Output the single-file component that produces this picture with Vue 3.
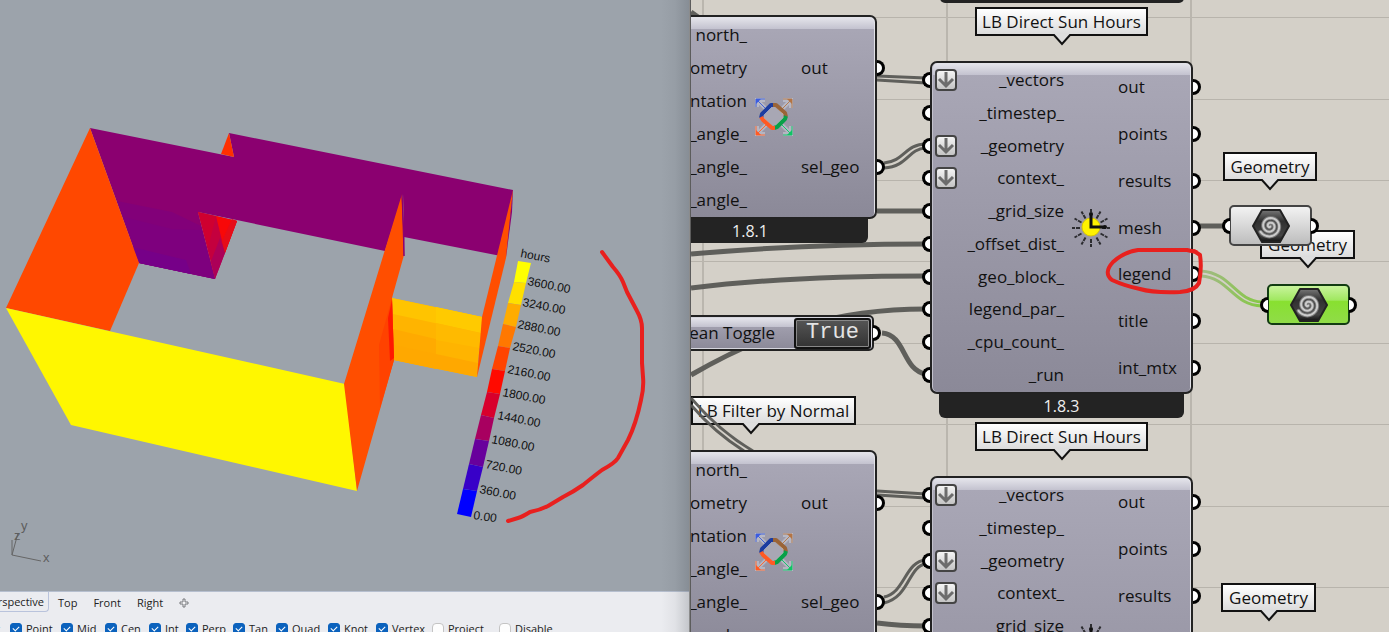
<script setup>
const legendSteps = [
  { color: '#ffff00', label: 'hours', x: 520, y: 257 },
  { color: '#ffe000', label: '3600.00', x: 527, y: 285 },
  { color: '#ffac00', label: '3240.00', x: 522, y: 306 },
  { color: '#ff7800', label: '2880.00', x: 517, y: 328 },
  { color: '#ff4400', label: '2520.00', x: 512, y: 350 },
  { color: '#ff0a00', label: '2160.00', x: 507, y: 373 },
  { color: '#d8002c', label: '1800.00', x: 502, y: 396 },
  { color: '#a80060', label: '1440.00', x: 497, y: 419 },
  { color: '#68009c', label: '1080.00', x: 491, y: 443 },
  { color: '#3800c8', label: '720.00', x: 485, y: 468 },
  { color: '#0000ff', label: '360.00', x: 479, y: 493 },
]
const legendLeft = [[518, 261], [514, 282], [508, 303], [503, 324], [498, 346], [492, 369], [487, 392], [481, 415], [475, 439], [469, 464], [463, 489], [457, 514]]
const legendRight = [[531, 263], [526, 283], [521, 305], [516, 327], [510, 348], [505, 371], [500, 394], [494, 418], [489, 441], [483, 467], [477, 491], [471, 517]]
const segment = (i) => [legendLeft[i], legendRight[i], legendRight[i + 1], legendLeft[i + 1]].map((p) => p.join(',')).join(' ')

const views = ['Perspective', 'Top', 'Front', 'Right']
const snaps = [
  { name: 'Near', on: true },
  { name: 'Point', on: true },
  { name: 'Mid', on: true },
  { name: 'Cen', on: true },
  { name: 'Int', on: true },
  { name: 'Perp', on: true },
  { name: 'Tan', on: true },
  { name: 'Quad', on: true },
  { name: 'Knot', on: true },
  { name: 'Vertex', on: true },
  { name: 'Project', on: false },
  { name: 'Disable', on: false },
]

const filterInputs = ['north_', '_geometry', '_orientation', '_angle_', '_angle_', '_angle_'].map((name) => ({ name }))
const filterOutputs = ['out', 'sel_geo']
const sunInputs = [
  { name: '_vectors', flat: true },
  { name: '_timestep_' },
  { name: '_geometry', flat: true },
  { name: 'context_', flat: true },
  { name: '_grid_size' },
  { name: '_offset_dist_' },
  { name: 'geo_block_' },
  { name: 'legend_par_' },
  { name: '_cpu_count_' },
  { name: '_run' },
]
const sunOutputs = ['out', 'points', 'results', 'mesh', 'legend', 'title', 'int_mtx']

const nodes = [
  { id: 'filter-a', kind: 'filter', inputs: filterInputs, outputs: filterOutputs, version: '1.8.1' },
  { id: 'filter-b', kind: 'filter', inputs: filterInputs, outputs: filterOutputs, version: '1.8.1' },
  { id: 'sun-a', kind: 'sun', inputs: sunInputs, outputs: sunOutputs, version: '1.8.3' },
  { id: 'sun-b', kind: 'sun', inputs: sunInputs, outputs: sunOutputs, version: '1.8.3' },
]
const tags = [
  { id: 'tag-sun-a', text: 'LB Direct Sun Hours' },
  { id: 'tag-sun-b', text: 'LB Direct Sun Hours' },
  { id: 'tag-filter', text: 'LB Filter by Normal' },
  { id: 'tag-geo-b', text: 'Geometry' },
  { id: 'tag-geo-a', text: 'Geometry' },
  { id: 'tag-geo-c', text: 'Geometry' },
]
const rays = Array.from({ length: 12 }, (_, i) => i * 30)

const spiral = Array.from({ length: 60 }, (_, i) => {
  const a = i * 0.24 + 1
  const r = 0.5 + i * 0.18
  return `${i ? 'L' : 'M'}${(18 + r * Math.cos(a)).toFixed(2)} ${(17 + r * Math.sin(a)).toFixed(2)}`
}).join('')
</script>

<template>
  <main class="desk">
    <section class="modeler">
      <div class="viewport">
        <svg class="scene" width="690" height="591" role="img" aria-label="Sun hours on walls">
          <g shape-rendering="geometricPrecision">
            <polygon points="90,128 234,157 229,133 513,190 506,257 404,237 403,194 385,251 198,212 215,279 139,263" fill="#8b0070" />
            <polygon points="117,201 172,212 201,226 215,279 139,263" fill="#820079" />
            <polygon points="124,217 172,229 202,230 215,279 139,263" fill="#7e007e" />
            <polygon points="132,247 186,260 191,274 139,263" fill="#760088" />
            <polygon points="229,133 234,157 221,154" fill="#ff3000" />
            <polygon points="198,212 237,221 215,279" fill="#c4003e" />
            <polygon points="216,216 237,221 225,253" fill="#f80808" />
            <polygon points="232,219 237,221 225,253 222,241" fill="#e60c18" />
            <polygon points="220,238 225,253 215,279 211,261" fill="#ac0058" />
            <polygon points="198,212 216,216 208,248" fill="#cf0030" />
            <polygon points="90,128 139,263 110,331 6,308" fill="#ff4800" />
            <polygon points="6,308 345,384 357,491 71,425" fill="#fff700" />
            <polygon points="392,298 482,317 477,377 394,360" fill="#ffb400" />
            <polygon points="392,298 482,317 481,333 393,314" fill="#ffc400" />
            <polygon points="436,307 482,317 481,333 436,323" fill="#ffca00" />
            <polygon points="436,323 481,333 480,348 436,340" fill="#ffba00" />
            <polygon points="393,329 436,339 436,369 394,360" fill="#ffaa00" />
            <polygon points="394,345 478,363 477,377 394,360" fill="#ffa800" />
            <polygon points="402,194 404,255 392,298 394,360 357,491 344,384" fill="#ff4e00" />
            <polygon points="379,345 392,298 394,360 380,408" fill="#ff4200" />
            <polygon points="388,318 392,300 394,358 390,361" fill="#ff1800" />
            <polygon points="402,194 404,237 404,256" fill="#8b0070" stroke="#8b0070" />
            <polygon points="513,190 506,258 477,377 482,317" fill="#ff4e00" />
            <polygon points="513,190 512,212 506,258 509,228" fill="#8b0070" />
          </g>
          <polygon v-for="(s, i) in legendSteps" :key="s.color" :points="segment(i)" :fill="s.color" />
          <text v-for="s in legendSteps" :key="s.label" class="legend-label" :x="s.x" :y="s.y" :transform="`rotate(11 ${s.x} ${s.y})`">{{ s.label }}</text>
          <text class="legend-label" x="473" y="519" transform="rotate(8 473 519)">0.00</text>
          <path class="marker" d="M602 252L613 267Q620 275 623 282L627 292L637 311Q642 320 642 328V363L643 377Q644 388 641 400Q636 424 628 440L618 458Q615 463 602 470Q594 476 583 485Q573 492 563 497L548 506Q540 510 530 512Q522 517 518 518L508 521" />
          <g class="axes">
            <path d="M12 540V555L41 561M12 555L18 533" />
            <text x="21" y="530">y</text>
            <text x="14" y="540">z</text>
            <text x="43" y="562">x</text>
          </g>
        </svg>
      </div>
      <footer class="status">
        <nav class="views" aria-label="Viewports">
          <button v-for="(v, i) in views" :key="v" type="button" class="view" :class="{ active: i === 0 }">{{ v }}</button>
          <button type="button" class="add" aria-label="Add viewport">
            <svg width="10" height="10"><path d="M4 1H6V4H9V6H6V9H4V6H1V4H4Z" fill="#f6f6f8" stroke="#77787c" /></svg>
          </button>
        </nav>
        <div class="snaps">
          <label v-for="s in snaps" :key="s.name" class="snap"><input type="checkbox" :checked="s.on" /><span>{{ s.name }}</span></label>
        </div>
      </footer>
    </section>

    <section class="canvas">
      <div class="upper-bar"></div>
      <div v-for="t in tags" :key="t.id" class="tag" :class="t.id">
        {{ t.text }}
        <svg class="tip" width="18" height="12"><path d="M1 0H17V1L9 10L1 1Z" fill="#dedede" /><path d="M0 1H1L9 10L17 1H18" fill="none" stroke="#111" stroke-width="2" /></svg>
      </div>

      <svg class="wires" width="100%" height="100%" aria-hidden="true">
        <defs>
          <linearGradient id="picked" x1="0" x2="1"><stop offset="0" stop-color="#a0b884" /><stop offset="1" stop-color="#80c83c" /></linearGradient>
        </defs>
        <g transform="translate(-690 0)">
          <g class="double">
            <path d="M877 76L926 78M877 80L926 83" />
            <path d="M884 163C905 161 905 144 926 144M884 168C909 166 907 149 926 148" />
            <path d="M691 398Q719 431 753 451M691 405Q714 432 744 451" />
            <path d="M877 491L926 494M877 495L926 498" />
            <path d="M884 597C905 593 905 561 926 560M884 603C910 597 908 566 926 564" />
          </g>
          <g class="single">
            <path d="M877 211H926M691 12L698 17" />
            <path d="M691 254C770 247 850 244 926 244" />
            <path d="M691 288C765 279 850 276 926 276" />
            <path d="M691 375C765 332 835 309 926 309" />
            <path d="M882 333C906 335 902 370 926 374" />
            <path d="M877 623Q900 626 926 626" />
            <path d="M1200 226H1224" />
          </g>
          <g class="double selected">
            <path d="M1201 271C1232 273 1235 301 1262 302M1201 276C1230 278 1232 305 1262 306" />
          </g>
        </g>
      </svg>

      <article v-for="n in nodes" :key="n.id" class="node" :class="[n.kind, n.id]">
        <div class="body">
          <ul class="ports inputs">
            <li v-for="(p, i) in n.inputs" :key="i">
              <i class="grip in"></i>
              <button v-if="p.flat" type="button" class="flatten" aria-label="Flatten">
                <svg width="18" height="18"><path d="M9 1V15M2 8L9 15L16 8" fill="none" stroke="#6c6c6c" stroke-width="3" /></svg>
              </button>
              <span>{{ p.name }}</span>
            </li>
          </ul>
          <svg v-if="n.kind === 'filter'" class="glyph" viewBox="0 0 38 38" width="38" height="38" fill="none" aria-hidden="true">
            <g stroke="#dfe3ee" stroke-width="4" opacity=".4"><path d="M2 9V2H10M2 2L11 11M28 2H36V10M36 2L27 11M2 28V36H10M2 36L11 27M36 28V36H28M36 36L27 27" /></g>
            <g stroke-width="1">
              <path d="M1 9V1H10M1 1L11 11" stroke="#4564d8" />
              <path d="M28 1H37V10M37 1L27 11" stroke="#b47c50" />
              <path d="M1 28V37H10M1 37L11 27" stroke="#ff6a32" />
              <path d="M37 28V37H28M37 37L27 27" stroke="#14c86c" />
            </g>
            <g>
              <path d="M1 1H6L1 6Z" fill="#3c5ce0" /><path d="M37 1V6L32 1Z" fill="#b47444" />
              <path d="M1 37V32L6 37Z" fill="#ff5a24" /><path d="M37 37H32L37 32Z" fill="#10c464" />
            </g>
            <path d="M19 7L30 18L19 30L7 19Z" fill="#a8a7b4" stroke="#e8e2da" stroke-width="1" />
            <g stroke-width="4" stroke-linejoin="bevel">
              <path d="M6 20L7 16L16 7L19 7" stroke="#1c3ca0" />
              <path d="M18 7L21 7L30 15L31 19" stroke="#9a6438" />
              <path d="M31 18L30 21L22 29L19 30" stroke="#08a048" />
              <path d="M6 19L8 22L17 30L20 30" stroke="#ff5a24" />
            </g>
          </svg>
          <svg v-else class="glyph" viewBox="0 0 38 38" width="38" height="38" fill="none" aria-hidden="true">
            <g stroke="#2c2c30" stroke-width="2" stroke-dasharray="4 1">
              <path v-for="a in rays" :key="a" d="M30 19H38" :transform="`rotate(${a} 19 19)`" />
            </g>
            <circle cx="19" cy="18" r="9" fill="#fff200" stroke="#dcc800" />
            <path d="M19 5V18H33" stroke="#111" stroke-width="3" />
            <circle cx="19" cy="5" r="2" fill="#111" /><circle cx="33" cy="18" r="2" fill="#111" />
          </svg>
          <ul class="ports outputs">
            <li v-for="p in n.outputs" :key="p"><span>{{ p }}</span><i class="grip out"></i></li>
          </ul>
        </div>
        <div class="version">{{ n.version }}</div>
      </article>

      <div class="toggle">
        <span id="toggle-name">Boolean Toggle</span>
        <button type="button" aria-labelledby="toggle-name">True</button>
        <i class="grip out"></i>
      </div>

      <div v-for="g in ['geo-a', 'geo-b']" :key="g" class="geo" :class="g">
        <i class="grip in"></i>
        <svg width="38" height="34" viewBox="0 0 38 34" aria-hidden="true">
          <defs>
            <linearGradient :id="`hex-${g}`" x2="0" y2="1"><stop offset="0" stop-color="#777" /><stop offset=".35" stop-color="#303030" /><stop offset=".8" stop-color="#444" /><stop offset="1" stop-color="#111" /></linearGradient>
          </defs>
          <path d="M10 1H28L37 17L28 33H10L1 17Z" :fill="`url(#hex-${g})`" stroke="#222" stroke-width="2" stroke-linejoin="round" />
          <path :d="spiral" fill="none" stroke="#777" stroke-width="4" stroke-linecap="round" />
          <path :d="spiral" fill="none" stroke="#ccc" stroke-width="2" stroke-linecap="round" />
        </svg>
        <i class="grip out"></i>
      </div>

      <svg class="notes" width="100%" height="100%" aria-hidden="true">
        <path class="marker" transform="translate(-690 0)" d="M1196 252L1187 250H1138Q1124 252 1113 262Q1103 273 1112 280Q1125 286 1140 289Q1153 293 1180 292Q1195 291 1199 283Q1202 268 1200 255L1194 251" />
      </svg>
    </section>
  </main>
</template>

<style>
body { margin: 0; overflow: hidden; }
</style>

<style scoped>
.desk { display: grid; grid-template-columns: 690fr 699fr; height: 100vh; overflow: hidden; font-family: "Open Sans", "Noto Sans", sans-serif; color: #111; }
.desk *, .desk *::before { box-sizing: border-box; }
button { font: inherit; color: inherit; padding: 0; margin: 0; }

.modeler { position: relative; display: flex; flex-direction: column; min-width: 0; background: #ebecf0; border-right: 1px solid #8c8c8c; overflow: hidden; }
.modeler::after { content: ""; position: absolute; inset: 0 0 0 auto; width: 28px; background: linear-gradient(90deg, transparent, rgba(60, 66, 74, .06) 50%, rgba(60, 66, 74, .22)); pointer-events: none; }
.viewport { flex: 1; min-height: 0; background: #9ca3ab; overflow: hidden; }
.scene { display: block; }
.legend-label { font: 12px "Liberation Sans", Arial, sans-serif; fill: #111; }
.marker { fill: none; stroke: #e8201e; stroke-width: 4; stroke-linecap: round; stroke-linejoin: round; }
.axes path { fill: none; stroke: #666; }
.axes text { font: 13px "Liberation Sans", Arial, sans-serif; fill: #5e5e5e; }

.status { flex: 0 0 41px; border-top: 1px solid #b6bfcf; overflow: hidden; font-size: 11px; line-height: 16px; color: #222; }
.views { display: flex; align-items: center; height: 20px; margin-left: -20px; }
.view { height: 20px; padding: 1px 0 0; margin-right: 16px; border: 0; background: none; }
.view.active { padding: 1px 4px 0 0; margin-right: 9px; width: 69px; text-align: right; border: 1px solid #b9c3dc; border-top: 0; border-radius: 0 0 4px 4px; }
.add { border: 0; background: none; height: 10px; display: flex; margin-top: 2px; }
.snaps { display: grid; grid-template-columns: 51px 51px 44px 44px 37px 47px 43px 52px 48px 56px 67px 60px; margin: 9px 0 0 -41px; }
.snap { display: flex; align-items: center; gap: 4px; white-space: nowrap; }
.snap input { appearance: none; flex: none; width: 12px; height: 13px; margin: 0; border: 1px solid #c4c4c4; border-radius: 4px; background: #fdfdfd; }
.snap input:checked { border-color: #0b62bd; border-radius: 3px; background: #0b62bd; position: relative; }
.snap input:checked::before { content: ""; position: absolute; left: 2px; top: 2px; width: 6px; height: 4px; border: solid #fff; border-width: 0 0 1px 1px; transform: rotate(-45deg); }

.canvas {
  position: relative; overflow: hidden; border-left: 1px solid #5c5c5c; font-size: 17px; line-height: 22px;
  background-color: #d4d0c8;
  background-image:
    repeating-linear-gradient(90deg, transparent 0 11px, #bab6ae 11px 13px, transparent 13px 244px),
    linear-gradient(#b8b4ac, #b8b4ac), linear-gradient(#b8b4ac, #b8b4ac), linear-gradient(#b8b4ac, #b8b4ac), linear-gradient(#b8b4ac, #b8b4ac),
    linear-gradient(#b8b4ac, #b8b4ac), linear-gradient(#b8b4ac, #b8b4ac), linear-gradient(#b8b4ac, #b8b4ac), linear-gradient(#b8b4ac, #b8b4ac);
  background-repeat: repeat, no-repeat, no-repeat, no-repeat, no-repeat, no-repeat, no-repeat, no-repeat, no-repeat;
  background-size: auto, 100% 1px, 100% 1px, 100% 1px, 100% 1px, 100% 1px, 100% 1px, 100% 1px, 100% 1px;
  background-position: 0 0, 0 17px, 0 99px, 0 180px, 0 261px, 0 343px, 0 424px, 0 506px, 0 587px;
}
.wires, .notes { position: absolute; top: 0; left: -1px; pointer-events: none; }
.double path, .single path { fill: none; stroke: #595955; stroke-width: 3; opacity: .95; }
.single path { stroke-width: 5; }
.double.selected path { stroke: url(#picked); stroke-width: 3; }

.upper-bar { position: absolute; left: 249px; top: -10px; width: 244px; height: 13px; border-radius: 0 0 5px 5px; background: #222; }
.tag { position: absolute; height: 29px; border: 2px solid #111; background: linear-gradient(#fff, #dcdcdc); text-align: center; line-height: 25px; white-space: nowrap; }
.tip { position: absolute; left: calc(50% - 9px); top: 25px; }
.tag-sun-a { left: 284px; top: 7px; width: 173px; }
.tag-sun-b { left: 284px; top: 422px; width: 173px; }
.tag-filter { left: 0; top: 396px; width: 165px; }
.tag-filter .tip { left: 49px; }
.tag-geo-a { left: 532px; top: 152px; width: 94px; }
.tag-geo-b { left: 569px; top: 230px; width: 95px; }
.tag-geo-c { left: 530px; top: 583px; width: 95px; }

.node { position: absolute; }
.filter { width: 254px; left: -68px; }
.sun { width: 263px; left: 239px; }
.filter-a { top: 15px; }
.filter-b { top: 450px; }
.sun-a { top: 61px; }
.sun-b { top: 476px; }
.body { display: grid; padding: 1px; border: 2px solid #222; border-radius: 7px; background: linear-gradient(#e6e6ec, #c3c2cf) 0 0 / 100% 12px no-repeat, linear-gradient(#aaa8b7, #8b8998); box-shadow: inset -1px 1px #e2e2e8, inset 1px 0 #c2c1cc; }
.filter .body { height: 204px; grid-template-columns: 121px 54px 1fr; }
.sun .body { height: 333px; grid-template-columns: 131px 54px 1fr; }
.ports { display: flex; flex-direction: column; list-style: none; margin: 0; padding: 0; min-height: 0; }
.ports li { position: relative; flex: 1 1 0; display: flex; align-items: center; min-height: 0; white-space: nowrap; }
.inputs li { justify-content: flex-end; }
.flatten { width: 22px; height: 22px; margin: 0 auto 0 2px; display: grid; place-items: center; border: 2px solid #444; border-radius: 4px; background: linear-gradient(#f4f4f4, #c4c4c4); }
.glyph { align-self: center; justify-self: center; }
.grip { position: absolute; top: calc(50% - 8px); width: 8px; height: 16px; border: 3px solid #000; background: #fff; }
.grip.in { left: -11px; border-right: 0; border-radius: 8px 0 0 8px; }
.grip.out { right: -11px; border-left: 0; border-radius: 0 8px 8px 0; }
.filter .grip.in { display: none; }
.version { height: 24px; margin: 0 9px; border-radius: 0 0 6px 6px; background: #232323; color: #eee; font-size: 16px; line-height: 24px; text-align: center; }

.toggle { position: absolute; left: -61px; top: 315px; width: 244px; height: 36px; display: flex; align-items: center; justify-content: flex-end; gap: 19px; padding-right: 1px; border: 2px solid #222; border-radius: 5px; background: linear-gradient(#e8e8ee, #c3c2cf) 0 0 / 100% 10px no-repeat, linear-gradient(#a9a7b6, #8b8998); box-shadow: inset 0 0 0 1px #d5d5dd; white-space: nowrap; }
.toggle button { width: 77px; height: 31px; border: 2px solid #111; border-radius: 3px; background: linear-gradient(#555, #333); box-shadow: inset 0 0 0 1px #888; color: #e4e4e4; font: 22px/24px "Liberation Mono", "Courier New", monospace; }
.toggle .grip.out, .geo .grip.out { right: -9px; }

.geo { position: absolute; width: 83px; height: 41px; display: grid; place-items: center; border: 2px solid #444; border-radius: 5px; background: linear-gradient(#f2f2f2, #d8d8d8 50%, #bdbdbd); }
.geo .grip.in { left: -9px; }
.geo-a { left: 538px; top: 205px; }
.geo-b { left: 576px; top: 284px; border-color: #123c12; background: linear-gradient(#c8f49c, #a0e860 38%, #88e030 42%, #90dc48); }
</style>
